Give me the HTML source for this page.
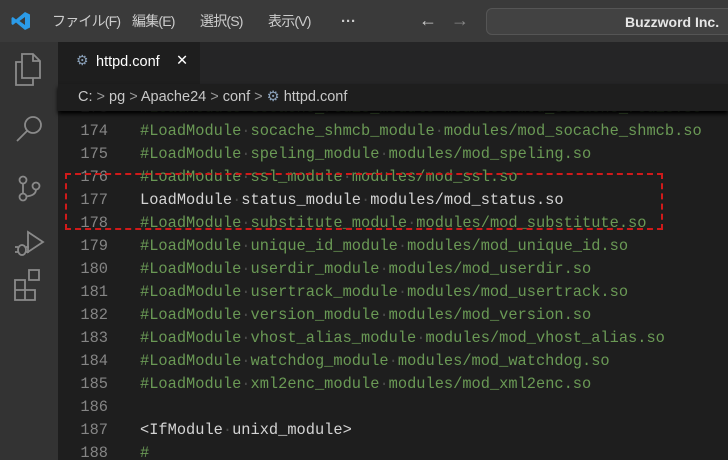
<!DOCTYPE html>
<html><head><meta charset="utf-8"><style>
*{margin:0;padding:0;box-sizing:border-box}
html,body{width:728px;height:460px;overflow:hidden}
body{background:#1e1e1e;font-family:"Liberation Sans","Noto Sans CJK JP",sans-serif;position:relative}
#title{position:absolute;left:0;top:0;width:728px;height:42px;background:#3a3a3a}
#title .m{position:absolute;top:11px;color:#ccc;font-size:14px;white-space:nowrap;letter-spacing:-0.8px}
#search{position:absolute;left:486px;top:8px;width:250px;height:27px;border:1px solid #555;border-radius:6px;background:#424242;color:#e6e6e6;font-size:14px;padding:5px 0 0 138px;font-weight:bold}
#act{position:absolute;left:0;top:42px;width:58px;height:418px;background:#333}
#tabs{position:absolute;left:58px;top:42px;width:670px;height:42px;background:#252526}
#tab{position:absolute;left:0;top:0;width:142px;height:42px;background:#1e1e1e;color:#fff;font-size:14.5px;padding:12px 0 0 38px}
#bc{position:absolute;left:58px;top:84px;width:670px;height:27px;background:#1e1e1e;color:#c8c8c8;font-size:14.5px;padding:5px 0 0 20px;box-shadow:0 3px 4px #000;z-index:2}
#ed{position:absolute;left:58px;top:97px;width:670px;font-family:"Liberation Mono",monospace;font-size:15.35px;line-height:23px}
.l{height:23px;position:relative;white-space:pre}
.n{position:absolute;left:0;width:50px;text-align:right;color:#858585}
.c{position:absolute;left:82px;color:#6a9955}
.w{position:absolute;left:82px;color:#d4d4d4}
i{font-style:normal;color:#4a4a4a}
#box{position:absolute;left:65px;top:173px;width:598px;height:57px;border:2px dashed #d01a1a;z-index:3}
</style></head><body>
<div id="title">
<svg style="position:absolute;left:11px;top:11px" width="20" height="20" viewBox="0 0 20 20"><path d="M14 1 L19 3.5 V16.5 L14 19 L5 11.5 L1.8 14 L0.5 13 V7 L1.8 6 L5 8.5 Z M14 6 L8.5 10 L14 14 Z" fill="#2b9be8" fill-rule="evenodd"/></svg>
<span class="m" style="left:52px">ファイル(F)</span>
<span class="m" style="left:132px">編集(E)</span>
<span class="m" style="left:200px">選択(S)</span>
<span class="m" style="left:268px">表示(V)</span>
<span class="m" style="left:341px;top:13px;font-weight:bold;font-size:15px;letter-spacing:0">···</span>
<span class="m" style="left:419px;top:10px;font-size:18px;letter-spacing:0">←</span>
<span class="m" style="left:451px;top:10px;font-size:18px;color:#888;letter-spacing:0">→</span>
<div id="search">Buzzword Inc.</div>
</div>
<div id="act">
<svg width="58" height="300" viewBox="0 0 58 300" fill="none" stroke="#8a8a8a" stroke-width="1.8">
<path d="M22 12 h11 l7 7 v17 h-18 z M33 12 v7 h7"/><path d="M22 20 h-6 v23 h17 v-7"/>
<circle cx="33" cy="83" r="8"/><path d="M27 89 L17 99"/>
<circle cx="23" cy="138" r="3.5"/><circle cx="23" cy="155" r="3.5"/><circle cx="36" cy="144" r="3.5"/><path d="M23 141.5 v10 M36 147.5 q0 6 -10 7"/>
<path d="M28 190 l15 10 -15 10 z"/><ellipse cx="22" cy="208" rx="4" ry="5"/><path d="M15 205h3M15 210h3M26 205h3M26 210h3"/>
<path d="M15 248h10v-10h-10z M15 258h10v-10h-10z M25 258h10v-10h-10z M29 228h10v10h-10z"/>
</svg>
</div>
<div id="tabs"><div id="tab"><span style="position:absolute;left:18px;top:10px;color:#8aa0b8;font-size:14px">⚙</span>httpd.conf<span style="position:absolute;left:118px;top:11px">✕</span></div></div>
<div id="bc">C: <span style="color:#999">&gt;</span> pg <span style="color:#999">&gt;</span> Apache24 <span style="color:#999">&gt;</span> conf <span style="color:#999">&gt;</span> <span style="color:#8aa0b8">⚙</span> httpd.conf</div>
<div id="ed"><div class="l"><span class="n">173</span><span class="c">#LoadModule<i>·</i>socache_redis_module<i>·</i>modules/mod_socache_redis.so</span></div><div class="l"><span class="n">174</span><span class="c">#LoadModule<i>·</i>socache_shmcb_module<i>·</i>modules/mod_socache_shmcb.so</span></div><div class="l"><span class="n">175</span><span class="c">#LoadModule<i>·</i>speling_module<i>·</i>modules/mod_speling.so</span></div><div class="l"><span class="n">176</span><span class="c">#LoadModule<i>·</i>ssl_module<i>·</i>modules/mod_ssl.so</span></div><div class="l"><span class="n">177</span><span class="w">LoadModule<i>·</i>status_module<i>·</i>modules/mod_status.so</span></div><div class="l"><span class="n">178</span><span class="c">#LoadModule<i>·</i>substitute_module<i>·</i>modules/mod_substitute.so</span></div><div class="l"><span class="n">179</span><span class="c">#LoadModule<i>·</i>unique_id_module<i>·</i>modules/mod_unique_id.so</span></div><div class="l"><span class="n">180</span><span class="c">#LoadModule<i>·</i>userdir_module<i>·</i>modules/mod_userdir.so</span></div><div class="l"><span class="n">181</span><span class="c">#LoadModule<i>·</i>usertrack_module<i>·</i>modules/mod_usertrack.so</span></div><div class="l"><span class="n">182</span><span class="c">#LoadModule<i>·</i>version_module<i>·</i>modules/mod_version.so</span></div><div class="l"><span class="n">183</span><span class="c">#LoadModule<i>·</i>vhost_alias_module<i>·</i>modules/mod_vhost_alias.so</span></div><div class="l"><span class="n">184</span><span class="c">#LoadModule<i>·</i>watchdog_module<i>·</i>modules/mod_watchdog.so</span></div><div class="l"><span class="n">185</span><span class="c">#LoadModule<i>·</i>xml2enc_module<i>·</i>modules/mod_xml2enc.so</span></div><div class="l"><span class="n">186</span></div><div class="l"><span class="n">187</span><span class="w">&lt;IfModule<i>·</i>unixd_module&gt;</span></div><div class="l"><span class="n">188</span><span class="c">#</span></div></div>
<div id="box"></div>
</body></html>
